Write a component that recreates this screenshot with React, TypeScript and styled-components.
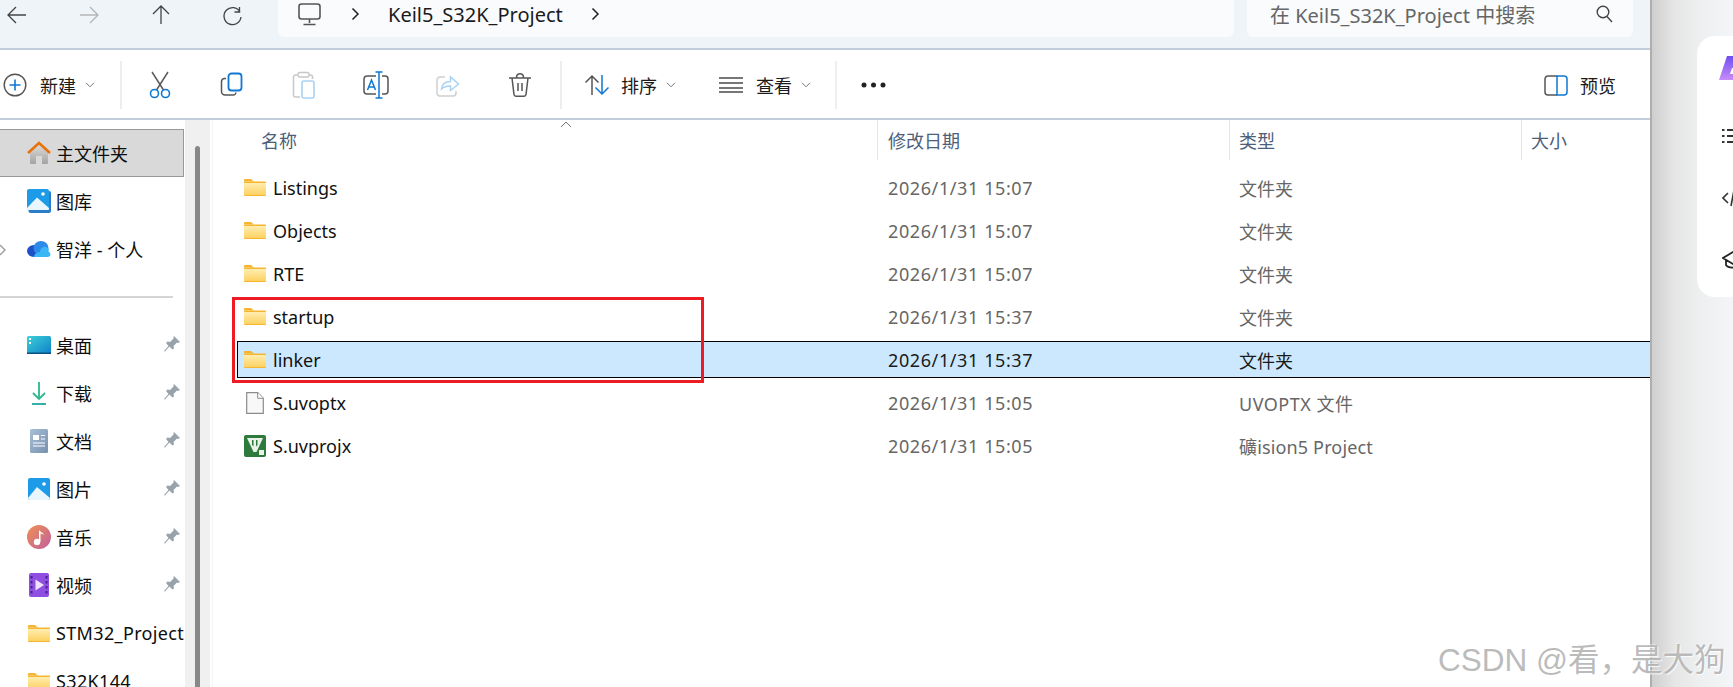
import React from 'react';
import styled, { createGlobalStyle } from 'styled-components';

const GlobalStyle = createGlobalStyle`
  html, body {
    margin: 0;
    padding: 0;
    background: #fff;
    font-family: "Noto Sans", "Noto Sans CJK SC", "Noto Sans CJK TC", sans-serif;
  }
`;

const Page = styled.div`
  position: relative;
  display: flex;
  width: 1733px;
  height: 687px;
  overflow: hidden;
`;

const Explorer = styled.div`
  display: flex;
  flex-direction: column;
  flex: none;
  width: 1650px;
  height: 100%;
  background: #fff;
`;

const TopBar = styled.div`
  display: flex;
  flex: none;
  height: 48px;
  background: #eff4f9;
  border-bottom: 2px solid #c1cfdc;
`;

const NavGroup = styled.div`
  display: flex;
  margin-left: -19px;
`;

const NavSlot = styled.div`
  display: flex;
  justify-content: center;
  width: 72px;
  padding-top: 3px;
  height: 24px;
`;

const AddressBar = styled.div`
  display: flex;
  align-items: center;
  width: 936px;
  height: 28px;
  padding: 0 0 9px 20px;
  margin-left: 9px;
  box-sizing: content-box;
  background: #f9fbfd;
  border-radius: 0 0 6px 6px;
  font-size: 20px;
  color: #1b1b1b;
`;

const Crumb = styled.span`
  display: flex;
  margin: 0 28px 0 ${p => p.$left}px;
`;

const SearchBox = styled.div`
  display: flex;
  align-items: center;
  justify-content: space-between;
  width: 343px;
  height: 28px;
  padding: 0 20px 9px 23px;
  margin-left: 13px;
  box-sizing: content-box;
  background: #f9fbfd;
  border-radius: 0 0 6px 6px;
  font-size: 20px;
  color: #666;
`;

const ToolBar = styled.div`
  display: flex;
  align-items: center;
  flex: none;
  height: 70px;
  box-sizing: border-box;
  padding: 2px 0 0 3px;
  border-bottom: 2px solid #c1cfdc;
`;

const ToolText = styled.span`
  font-size: 18px;
  color: #1b1b1b;
  margin-left: ${p => p.$gap ?? 12}px;
`;

const Caret = styled.span`
  display: flex;
  margin-left: ${p => p.$gap ?? 10}px;
`;

const ToolSep = styled.div`
  width: 2px;
  height: 48px;
  background: #eeeeee;
  margin-left: ${p => p.$left}px;
  margin-right: ${p => p.$right}px;
`;

const ToolSpacer = styled.span`
  flex: none;
  width: ${p => p.$w}px;
`;

const ToolSlot = styled.div`
  display: flex;
  align-items: center;
  justify-content: center;
  width: 72px;
`;

const PreviewBtn = styled.div`
  display: flex;
  align-items: center;
  margin-left: auto;
  margin-right: 34px;
`;

const Body = styled.div`
  display: flex;
  flex: 1;
  min-height: 0;
`;

const Sidebar = styled.nav`
  flex: none;
  width: 185px;
  padding-top: 9px;
  box-sizing: border-box;
  overflow: hidden;
`;

const SideRow = styled.div`
  position: relative;
  display: flex;
  align-items: center;
  width: 184px;
  height: 48px;
  box-sizing: border-box;
  padding-left: 27px;
  font-size: 18px;
  color: #0d0d0d;
  white-space: nowrap;
  letter-spacing: ${p => (p.$latin ? '0.35px' : '0')};
  background: ${p => (p.$active ? '#d9d9d9' : 'transparent')};
  border: 1px solid ${p => (p.$active ? '#999' : 'transparent')};
  border-left: none;
`;

const SideIcon = styled.span`
  display: flex;
  justify-content: center;
  flex: none;
  width: 24px;
  margin-right: 5px;
`;

const SidePin = styled.span`
  display: flex;
  position: absolute;
  right: 3px;
  top: 14px;
`;

const Expander = styled.span`
  display: flex;
  position: absolute;
  left: 0;
  top: 18px;
`;

const SideDivider = styled.div`
  width: 173px;
  height: 2px;
  margin: 23px 0;
  background: #d5d5d5;
`;

const ScrollTrack = styled.div`
  flex: none;
  width: 25px;
  padding: 26px 10px 0;
  box-sizing: border-box;
  background: #f0f0f0;
  box-shadow: 2px 0 0 #fff, 3px 0 0 #f4f4f4;
`;

const ScrollThumb = styled.div`
  width: 5px;
  height: 100%;
  border-radius: 3px 3px 0 0;
  background: #888;
`;

const Main = styled.main`
  position: relative;
  flex: 1;
`;

const HeaderRow = styled.div`
  display: grid;
  grid-template-columns: 668px 352px 292px 1fr;
  height: 40px;
`;

const HeaderCell = styled.div`
  display: flex;
  align-items: center;
  padding-left: ${p => p.$pad}px;
  font-size: 18px;
  color: #4c607a;
  border-right: ${p => (p.$last ? 'none' : '1px solid #e5e5e5')};
`;

const SortMark = styled.span`
  display: flex;
  position: absolute;
  left: 350px;
  top: 1px;
`;

const FileList = styled.div`
  display: flex;
  flex-direction: column;
  gap: 6px;
  padding: 9px 0 0 27px;
`;

const FileRow = styled.div`
  display: grid;
  grid-template-columns: 644px 351px 1fr;
  align-items: center;
  height: 37px;
  box-sizing: border-box;
  padding-left: 6px;
  font-size: 18px;
  background: ${p => (p.$selected ? '#cce8ff' : 'transparent')};
  border: 1px solid ${p => (p.$selected ? '#000' : 'transparent')};
  border-right: none;
`;

const NameCell = styled.div`
  display: flex;
  align-items: center;
  gap: 7px;
  color: #111;
`;

const FileIcon = styled.span`
  display: flex;
  justify-content: center;
  width: 22px;
`;

const MetaCell = styled.div`
  color: ${p => (p.$selected ? '#1a1a1a' : '#666')};
  letter-spacing: ${p => p.$spacing ?? 0}px;
`;

const RedFrame = styled.div`
  position: absolute;
  left: 22px;
  top: 177px;
  width: 472px;
  height: 86px;
  box-sizing: border-box;
  border: 3px solid #ed1c24;
  pointer-events: none;
`;

const Backdrop = styled.aside`
  flex: 1;
  padding: 36px 0 0 45px;
  border-left: 2px solid #aeaeae;
  background: linear-gradient(90deg, #cfcfcf 0%, #e6e6e6 28%, #eeeff0 60%, #f3f5f7 100%);
`;

const ToolPanel = styled.div`
  display: flex;
  flex-direction: column;
  width: 36px;
  height: 261px;
  padding: 20px 0 0 22px;
  box-sizing: border-box;
  overflow: hidden;
  background: #fff;
  border-radius: 18px 0 0 18px;

  svg {
    flex: none;
  }
`;

const PanelIcon = styled.span`
  display: flex;
  flex: none;
  margin-top: ${p => p.$top}px;
  margin-left: ${p => p.$left ?? 0}px;
`;

const Watermark = styled.div`
  position: absolute;
  left: 1438px;
  top: 639px;
  font-family: "Liberation Sans", "Noto Sans CJK SC", sans-serif;
  font-size: 31.5px;
  line-height: 42px;
  white-space: nowrap;
  color: rgba(165, 165, 165, 0.75);
  text-shadow: 1px 1px 1px rgba(255, 255, 255, 0.9), -1px -1px 1px rgba(255, 255, 255, 0.5);
`;

// navigation and toolbar icons
const Line = ({ d, c = '#444', w = 1.3, size = 24 }: { d: string; c?: string; w?: number; size?: number }) => (
  <svg width={size} height={size} viewBox="0 0 24 24" fill="none" stroke={c} strokeWidth={w}>
    <path d={d} />
  </svg>
);

const Chevron = () => (
  <svg width="10" height="6" viewBox="0 0 10 6" fill="none" stroke="#777" strokeWidth="1">
    <path d="M1 .8 5 4.8 9 .8" />
  </svg>
);

const Monitor = () => (
  <svg width="23" height="23" viewBox="0 0 23 23" fill="none" stroke="#555" strokeWidth="1.6">
    <rect x="1" y="1" width="21" height="15" rx="2.5" />
    <path d="M11.5 16v4M5.5 21.5h12" />
  </svg>
);

const CrumbArrow = () => (
  <svg width="9" height="14" viewBox="0 0 9 14" fill="none" stroke="#222" strokeWidth="1.5">
    <path d="M1.5 1.5 7 7l-5.5 5.5" />
  </svg>
);

const SearchGlyph = () => (
  <svg width="17" height="18" viewBox="0 0 17 18" fill="none" stroke="#444" strokeWidth="1.4">
    <circle cx="7" cy="7" r="5.8" />
    <path d="m11 11.5 5 5.5" />
  </svg>
);

const PlusCircle = () => (
  <svg width="24" height="24" viewBox="0 0 24 24" fill="none">
    <circle cx="12" cy="12" r="10.8" stroke="#555" strokeWidth="1.4" />
    <path d="M12 6.5v11M6.5 12h11" stroke="#0f78d4" strokeWidth="1.6" />
  </svg>
);

const Scissors = () => (
  <svg width="24" height="28" viewBox="0 0 24 28" fill="none">
    <path d="M4 1 15.5 19M20 1 8.5 19" stroke="#555" strokeWidth="1.4" />
    <circle cx="6.5" cy="22.5" r="4" stroke="#0f78d4" strokeWidth="1.6" />
    <circle cx="17.5" cy="22.5" r="4" stroke="#0f78d4" strokeWidth="1.6" />
  </svg>
);

const Copy = () => (
  <svg width="24" height="26" viewBox="0 0 24 26" fill="none">
    <path d="M6 6.5H4.5A3 3 0 0 0 1.5 9.5v10a3.5 3.5 0 0 0 3.5 3.5h8a3 3 0 0 0 3-2.5" stroke="#555" strokeWidth="1.5" />
    <rect x="8.5" y="1.5" width="13" height="17" rx="3" stroke="#0f78d4" strokeWidth="1.8" />
  </svg>
);

const Paste = () => (
  <svg width="24" height="28" viewBox="0 0 24 28" fill="none">
    <path d="M6 4H3.5A2 2 0 0 0 1.5 6v18a2 2 0 0 0 2 2H8M17 4h1.5a2 2 0 0 1 2 2v2" stroke="#c8c8c8" strokeWidth="1.5" />
    <rect x="6" y="1.5" width="11" height="4.5" rx="1.5" stroke="#c8c8c8" strokeWidth="1.4" />
    <rect x="10" y="10" width="12" height="17" rx="2" stroke="#a9d2f3" strokeWidth="1.6" />
  </svg>
);

const Rename = () => (
  <svg width="26" height="28" viewBox="0 0 26 28" fill="none">
    <path d="M13 5H4a3 3 0 0 0-3 3v12a3 3 0 0 0 3 3h9M19 5h3a3 3 0 0 1 3 3v12a3 3 0 0 1-3 3h-3" stroke="#555" strokeWidth="1.5" />
    <path d="M16 1v26M12.500 1h7M12.500 27h7M4.500 19 8.500 9l4 10M6 16h5" stroke="#0f78d4" strokeWidth="1.5" />
  </svg>
);

const Share = () => (
  <svg width="24" height="24" viewBox="0 0 24 24" fill="none">
    <path d="M9 4H4a3 3 0 0 0-3 3v13a3 3 0 0 0 3 3h13a3 3 0 0 0 3-3v-2" stroke="#cfcfcf" strokeWidth="1.5" />
    <path d="M5.500 16c.5-5 4-7.500 9-7.500V4l8 7-8 6.500V13c-4 0-6.500 .8-9 3Z" stroke="#a9d2f3" strokeWidth="1.5" />
  </svg>
);

const Trash = () => (
  <svg width="24" height="26" viewBox="0 0 24 26" fill="none" stroke="#555" strokeWidth="1.5">
    <path d="M1 6h22M4 6l2 16.500a2 2 0 0 0 2 1.800h8a2 2 0 0 0 2-1.800L20 6M8.500 5.500c0-5 7-5 7 0M10 11v8M14 11v8" />
  </svg>
);

const SortIcon = () => (
  <svg width="26" height="24" viewBox="0 0 26 24" fill="none" strokeWidth="1.5">
    <path d="M8 22V3M1.500 9.500 8 3l6.500 6.500" stroke="#555" />
    <path d="M18 2v19M11.500 14.500 18 21l6.500-6.500" stroke="#0f78d4" />
  </svg>
);

const ListIcon = () => (
  <svg width="24" height="16" viewBox="0 0 24 16" stroke="#777" strokeWidth="2">
    <path d="M0 1h24M0 6h24M0 11h24M0 15h24" />
  </svg>
);

const Dots = () => (
  <svg width="25" height="6" viewBox="0 0 25 6" fill="#222">
    <circle cx="3" cy="3" r="2.500" />
    <circle cx="12.500" cy="3" r="2.500" />
    <circle cx="22" cy="3" r="2.500" />
  </svg>
);

const PreviewIcon = () => (
  <svg width="24" height="21" viewBox="0 0 24 21" fill="none">
    <path d="M13 1H4a3 3 0 0 0-3 3v13a3 3 0 0 0 3 3h9" stroke="#555" strokeWidth="1.5" />
    <path d="M13 1h7a3 3 0 0 1 3 3v13a3 3 0 0 1-3 3h-7Z" stroke="#0f78d4" strokeWidth="1.5" />
  </svg>
);

// sidebar and file icons
const Folder = () => (
  <svg width="22" height="17" viewBox="0 0 22 17">
    <defs>
      <linearGradient id="fold" x1="0" y1="0" x2="0" y2="1">
        <stop offset="0" stopColor="#ffedb0" />
        <stop offset="1" stopColor="#fdd263" />
      </linearGradient>
    </defs>
    <path d="M0 1a1 1 0 0 1 1-1h6l3 2.500h-10Z" fill="#f5b52e" />
    <rect y="2.500" width="22" height="14.500" rx="1" fill="#f5b52e" />
    <rect y="4" width="22" height="12" fill="url(#fold)" />
  </svg>
);

const Home = () => (
  <svg width="24" height="24" viewBox="0 0 24 24">
    <defs>
      <linearGradient id="homeBody" x1="0" y1="0" x2="0" y2="1">
        <stop offset="0" stopColor="#e0dedb" />
        <stop offset="1" stopColor="#a3a3a3" />
      </linearGradient>
    </defs>
    <path d="M3 11 12 3l9 8v11a1 1 0 0 1-1 1h-5v-8H9v8H4a1 1 0 0 1-1-1Z" fill="url(#homeBody)" />
    <path d="M1 12 12 2l11 10" fill="none" stroke="#e8710a" strokeWidth="2.600" />
  </svg>
);

const Gallery = () => (
  <svg width="24" height="24" viewBox="0 0 24 24">
    <rect x="1.500" y="2" width="22.500" height="22" rx="2" fill="#2b7cc9" />
    <rect width="22" height="21" rx="2" fill="#1e9be8" />
    <path d="M0 19 10 8.500 22 19v1a1 1 0 0 1-1 1H1a1 1 0 0 1-1-1Z" fill="#eaf6fd" />
    <circle cx="16" cy="5" r="1.800" fill="#fff" />
  </svg>
);

const Cloud = () => (
  <svg width="24" height="16" viewBox="0 0 24 16">
    <ellipse cx="7" cy="10" rx="7" ry="6" fill="#1e50c8" />
    <ellipse cx="14" cy="7" rx="7.500" ry="7" fill="#2d8ae8" />
    <path d="M7 16c0-3 3-5 6-5 0-3 3-6 6-5 3 1 3 3 2.500 4.500C24 11.500 24.500 16 20.500 16Z" fill="#38b6f5" />
  </svg>
);

const Desktop = () => (
  <svg width="24" height="18" viewBox="0 0 24 18">
    <defs>
      <linearGradient id="desk" x1="0" y1="0" x2="1" y2="1">
        <stop offset="0" stopColor="#3cd0d8" />
        <stop offset="1" stopColor="#1080c8" />
      </linearGradient>
    </defs>
    <rect width="24" height="18" rx="1.500" fill="url(#desk)" />
    <rect y="16.500" width="24" height="1.500" fill="#0a4f80" />
    <rect x="2" y="2" width="2" height="2" fill="#fff" />
    <rect x="2" y="6" width="2" height="2" fill="#fff" />
  </svg>
);

const Download = () => (
  <svg width="24" height="24" viewBox="0 0 24 24" fill="none">
    <path d="M12 1v17M6 12l6 6 6-6" stroke="#2ab88e" strokeWidth="1.800" />
    <path d="M5 23h14" stroke="#1fa8a0" strokeWidth="1.800" />
  </svg>
);

const Doc = () => (
  <svg width="18" height="24" viewBox="0 0 18 24">
    <defs>
      <linearGradient id="docFill" x1="0" y1="0" x2="1" y2="1">
        <stop offset="0" stopColor="#a9bfd8" />
        <stop offset="1" stopColor="#7690ae" />
      </linearGradient>
    </defs>
    <rect width="18" height="24" rx="1.500" fill="url(#docFill)" />
    <path d="M3 6h6v5H3ZM11 6h4v1h-4ZM11 9.500h4v1h-4ZM3 13.500h12v1H3ZM3 16.500h12v1H3Z" fill="#fff" />
  </svg>
);

const Picture = () => (
  <svg width="22" height="22" viewBox="0 0 22 22">
    <rect width="22" height="22" rx="2" fill="#1e9be8" />
    <path d="M0 20 9 9l13 11v0a2 2 0 0 1-2 2H2a2 2 0 0 1-2-2Z" fill="#eaf6fd" />
    <circle cx="16" cy="6" r="1.800" fill="#fff" />
  </svg>
);

const Music = () => (
  <svg width="24" height="24" viewBox="0 0 24 24">
    <defs>
      <linearGradient id="musicFill" x1="0" y1="0" x2="1" y2="1">
        <stop offset="0" stopColor="#f09050" />
        <stop offset="1" stopColor="#c05fa0" />
      </linearGradient>
    </defs>
    <circle cx="12" cy="12" r="12" fill="url(#musicFill)" />
    <circle cx="10" cy="17" r="3.200" fill="#fff" />
    <path d="M12 17V5c1 2 4 2.500 5 4.500-2-.5-3-1-3.500-1V17Z" fill="#fff" />
  </svg>
);

const Video = () => (
  <svg width="20" height="24" viewBox="0 0 20 24">
    <rect width="20" height="24" rx="2" fill="#8f4fe0" />
    <path d="M1.500 3h2v2.500h-2ZM1.500 8h2v2.500h-2ZM1.500 13h2v2.500h-2ZM1.500 18h2v2.500h-2ZM16.500 3h2v2.500h-2ZM16.500 8h2v2.500h-2ZM16.500 13h2v2.500h-2ZM16.500 18h2v2.500h-2Z" fill="#4b2090" />
    <path d="M6.500 6.500 15 12l-8.500 5.500Z" fill="#eee2fb" />
  </svg>
);

const Pin = () => (
  <svg width="16" height="16" viewBox="0 0 16 16" fill="#98a2aa">
    <path d="M10 0 16 6l-2 1-1-.5L9.500 10l.5 2.500-1.500 1L5.500 10.500 1 15.500 0 15l4.500-5L2 7l1.500-1.500L6 6l3.500-3.500L9.500 1Z" />
  </svg>
);

const ExpandMark = () => (
  <svg width="6" height="12" viewBox="0 0 6 12" fill="none" stroke="#999" strokeWidth="1.300">
    <path d="M0 1 5 6 0 11" />
  </svg>
);

const BlankFile = () => (
  <svg width="18" height="22" viewBox="0 0 18 22">
    <path d="M.7.7h11l5.600 5.600v15H.7Z" fill="#f8f8f8" stroke="#8c8c8c" strokeWidth="1.200" />
    <path d="M11.700.7v5.600h5.600" fill="#fff" stroke="#8c8c8c" />
  </svg>
);

const UvisionIcon = () => (
  <svg width="22" height="22" viewBox="0 0 22 22">
    <rect width="22" height="22" rx="2" fill="#2e7a3c" />
    <path d="M3 3h16l-6.500 14h-3Z" fill="#e8f2e8" />
    <path d="M8 5v5l1.500 1.500v-6.500ZM12 5v6.500l1.500-1.500V5Z" fill="#2e7a3c" />
    <rect x="15" y="15" width="5" height="5" fill="#e8f2e8" />
  </svg>
);

const PanelLogo = () => (
  <svg width="22" height="24" viewBox="0 0 22 24">
    <defs>
      <linearGradient id="panelLogo" x1="0" y1="0" x2="0" y2="1">
        <stop offset="0" stopColor="#6f4ff0" />
        <stop offset="1" stopColor="#c88cf8" />
      </linearGradient>
    </defs>
    <path d="M8 0h14v24H0Z" fill="url(#panelLogo)" />
    <path d="M13 12h9v6h-11Z" fill="#fff" />
  </svg>
);

const PanelList = () => (
  <svg width="20" height="16" viewBox="0 0 20 16" stroke="#333" strokeWidth="1.800">
    <path d="M0 2h2.500M5 2h15M0 8h2.500M5 8h15M0 14h2.500M5 14h15" />
  </svg>
);

const PanelCode = () => (
  <svg width="20" height="18" viewBox="0 0 20 18" fill="none" stroke="#333" strokeWidth="1.600">
    <path d="M6 4 1 9l5 5M12 1 9 17" />
  </svg>
);

const PanelCap = () => (
  <svg width="22" height="20" viewBox="0 0 22 20" fill="none" stroke="#222" strokeWidth="1.800">
    <path d="M11 2 1 8l10 6 10-6ZM4 10v5c2 3 10 4 14 0v-5" />
  </svg>
);

const sideTop = [
  { label: '主文件夹', icon: <Home />, active: true },
  { label: '图库', icon: <Gallery /> },
  { label: '智洋 - 个人', icon: <Cloud />, expand: true },
];

const sideBottom = [
  { label: '桌面', icon: <Desktop />, pin: true },
  { label: '下载', icon: <Download />, pin: true },
  { label: '文档', icon: <Doc />, pin: true },
  { label: '图片', icon: <Picture />, pin: true },
  { label: '音乐', icon: <Music />, pin: true },
  { label: '视频', icon: <Video />, pin: true },
  { label: 'STM32_Project', icon: <Folder />, latin: true },
  { label: 'S32K144', icon: <Folder />, latin: true },
];

const files = [
  { name: 'Listings', icon: <Folder />, date: '2026/1/31 15:07', type: '文件夹' },
  { name: 'Objects', icon: <Folder />, date: '2026/1/31 15:07', type: '文件夹' },
  { name: 'RTE', icon: <Folder />, date: '2026/1/31 15:07', type: '文件夹' },
  { name: 'startup', icon: <Folder />, date: '2026/1/31 15:37', type: '文件夹' },
  { name: 'linker', icon: <Folder />, date: '2026/1/31 15:37', type: '文件夹', selected: true },
  { name: 'S.uvoptx', icon: <BlankFile />, date: '2026/1/31 15:05', type: 'UVOPTX 文件', typeSpacing: 0.5 },
  { name: 'S.uvprojx', icon: <UvisionIcon />, date: '2026/1/31 15:05', type: '礦ision5 Project', typeSpacing: 0.15 },
];

const SideItem = ({ item }: { item: any }) => (
  <SideRow $active={item.active} $latin={item.latin}>
    {item.expand && <Expander><ExpandMark /></Expander>}
    <SideIcon>{item.icon}</SideIcon>
    {item.label}
    {item.pin && <SidePin><Pin /></SidePin>}
  </SideRow>
);

export default function App() {
  return (
    <Page>
      <GlobalStyle />
      <Explorer>
        <TopBar>
          <NavGroup>
            <NavSlot><Line d="M21 12H3M11 4l-8 8 8 8" /></NavSlot>
            <NavSlot><Line d="M3 12h18M13 4l8 8-8 8" c="#b5b5b5" /></NavSlot>
            <NavSlot><Line d="M12 21V3M4 11l8-8 8 8" /></NavSlot>
            <NavSlot><Line d="M18.500 4v5h-5M19 9a8.500 8.500 0 1 0 1 5" /></NavSlot>
          </NavGroup>
          <AddressBar>
            <Monitor />
            <Crumb $left={30}><CrumbArrow /></Crumb>
            Keil5_S32K_Project
            <Crumb $left={28}><CrumbArrow /></Crumb>
          </AddressBar>
          <SearchBox>
            <span>在 Keil5_S32K_Project 中搜索</span>
            <SearchGlyph />
          </SearchBox>
        </TopBar>

        <ToolBar>
          <PlusCircle />
          <ToolText $gap={13}>新建</ToolText>
          <Caret $gap={9}><Chevron /></Caret>
          <ToolSep $left={25} $right={2} />
          <ToolSlot><Scissors /></ToolSlot>
          <ToolSlot><Copy /></ToolSlot>
          <ToolSlot><Paste /></ToolSlot>
          <ToolSlot><Rename /></ToolSlot>
          <ToolSlot><Share /></ToolSlot>
          <ToolSlot><Trash /></ToolSlot>
          <ToolSep $left={4} $right={22} />
          <SortIcon />
          <ToolText $gap={11}>排序</ToolText>
          <Caret $gap={9}><Chevron /></Caret>
          <ToolSpacer $w={43} />
          <ListIcon />
          <ToolText $gap={13}>查看</ToolText>
          <Caret $gap={9}><Chevron /></Caret>
          <ToolSep $left={24} $right={24} />
          <Dots />
          <PreviewBtn>
            <PreviewIcon />
            <ToolText $gap={12}>预览</ToolText>
          </PreviewBtn>
        </ToolBar>

        <Body>
          <Sidebar>
            {sideTop.map(item => <SideItem key={item.label} item={item} />)}
            <SideDivider />
            {sideBottom.map(item => <SideItem key={item.label} item={item} />)}
          </Sidebar>
          <ScrollTrack><ScrollThumb /></ScrollTrack>
          <Main>
            <SortMark>
              <svg width="12" height="7" viewBox="0 0 12 7" fill="none" stroke="#777" strokeWidth="1">
                <path d="M1 6 6 1l5 5" />
              </svg>
            </SortMark>
            <HeaderRow>
              <HeaderCell $pad={51}>名称</HeaderCell>
              <HeaderCell $pad={10}>修改日期</HeaderCell>
              <HeaderCell $pad={9}>类型</HeaderCell>
              <HeaderCell $pad={9} $last>大小</HeaderCell>
            </HeaderRow>
            <FileList>
              {files.map(f => (
                <FileRow key={f.name} $selected={f.selected}>
                  <NameCell>
                    <FileIcon>{f.icon}</FileIcon>
                    {f.name}
                  </NameCell>
                  <MetaCell $selected={f.selected} $spacing={0.6}>{f.date}</MetaCell>
                  <MetaCell $selected={f.selected} $spacing={f.typeSpacing}>{f.type}</MetaCell>
                </FileRow>
              ))}
            </FileList>
            <RedFrame />
          </Main>
        </Body>
      </Explorer>

      <Backdrop>
        <ToolPanel>
          <PanelLogo />
          <PanelIcon $top={48} $left={3}><PanelList /></PanelIcon>
          <PanelIcon $top={45} $left={3}><PanelCode /></PanelIcon>
          <PanelIcon $top={43} $left={3}><PanelCap /></PanelIcon>
        </ToolPanel>
      </Backdrop>

      <Watermark>CSDN @看，是大狗</Watermark>
    </Page>
  );
}
